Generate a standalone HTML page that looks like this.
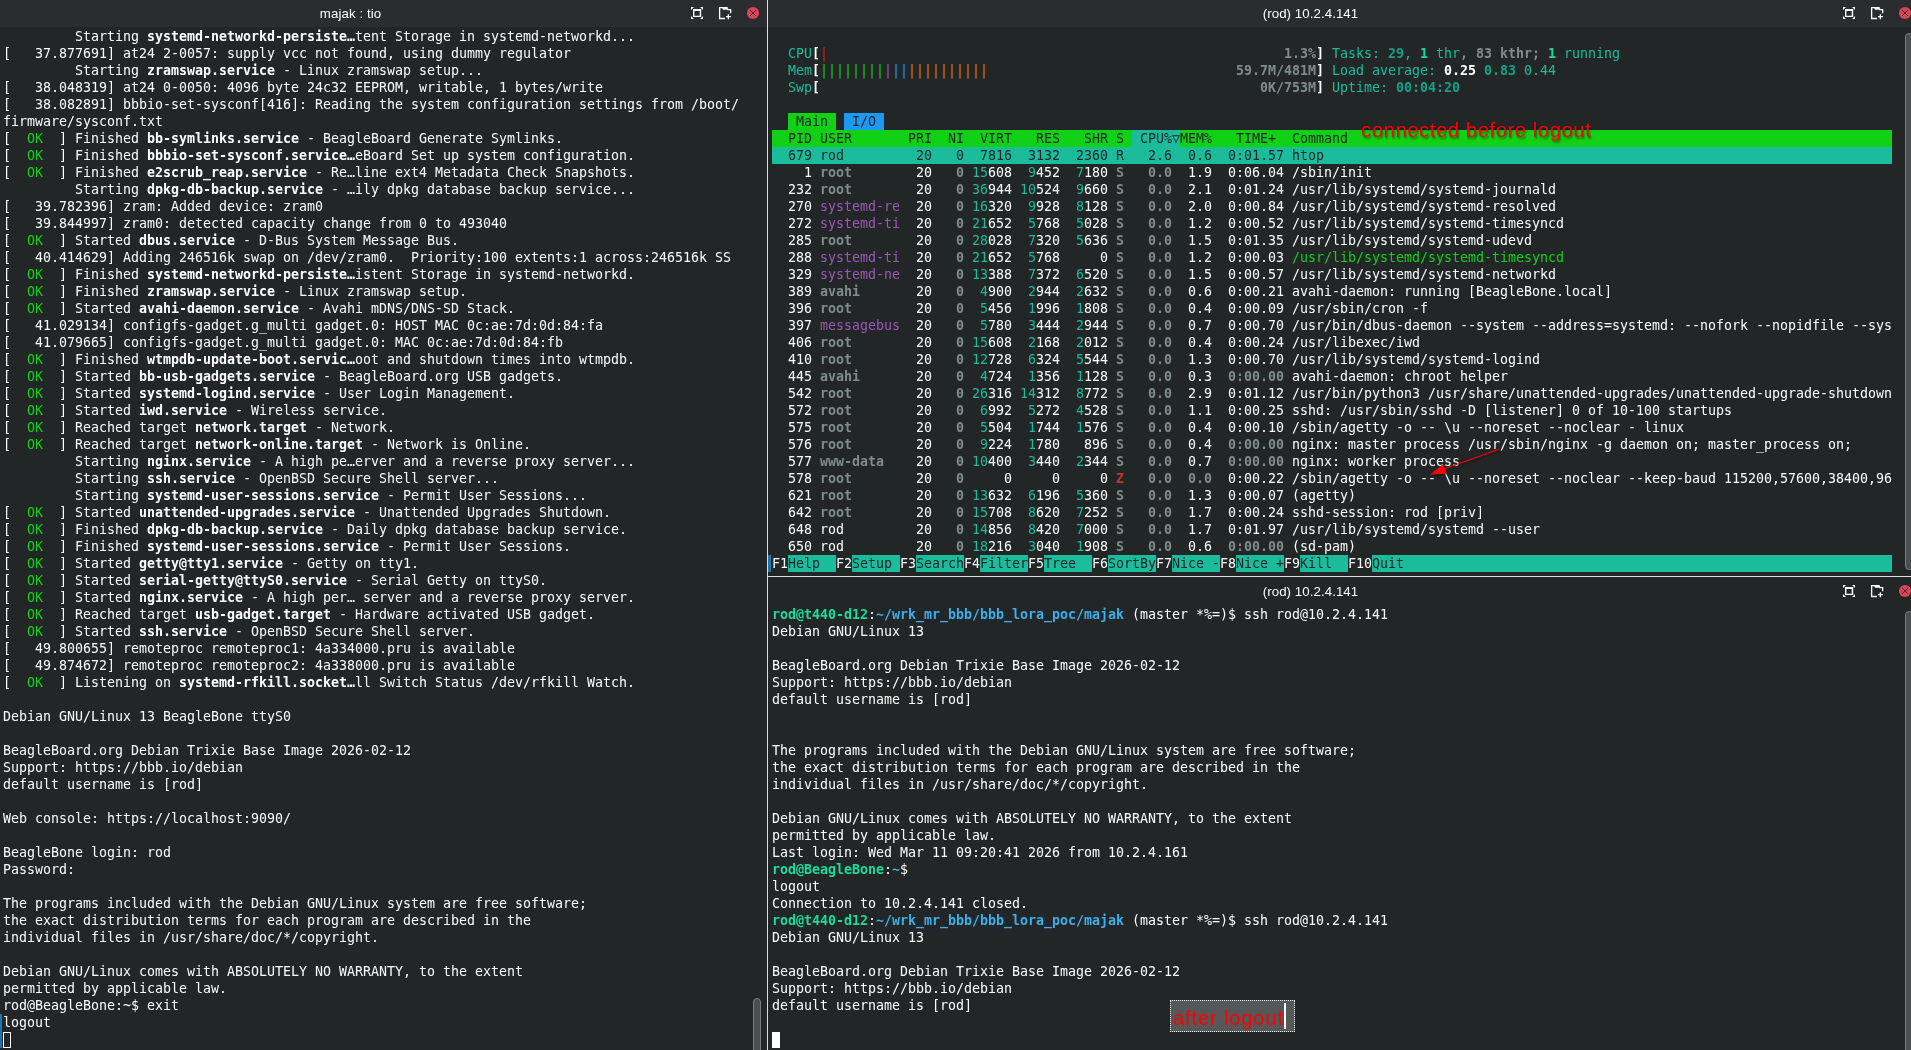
<!DOCTYPE html>
<html><head><meta charset="utf-8"><title>konsole</title>
<style>
html,body{margin:0;padding:0;background:#232627;}
body{width:1911px;height:1050px;overflow:hidden;position:relative;}
pre{will-change:transform;position:absolute;margin:0;font-family:"DejaVu Sans Mono","Liberation Mono",monospace;font-size:13.3px;letter-spacing:-0.0055px;line-height:17px;color:#fcfcfc;white-space:pre;font-variant-ligatures:none;}
.b,.w{font-weight:bold;color:#fff}
.g{color:#11d116}
.G{color:#1cdc9a;font-weight:bold}
.B{color:#3daee9;font-weight:bold}
.c{color:#1abc9c}
.C{color:#16a085;font-weight:bold}
.k{color:#7f8c8d;font-weight:bold}
.m{color:#9b59b6}
.r{color:#ed1515}
.R{color:#c0392b;font-weight:bold}
.o{color:#f67400}
.bl{color:#1d99f3}
.d{color:#232627}
i{position:absolute;height:17px;display:block}
.tb{position:absolute;height:27px;background:#2a2c2f;}
.tt{will-change:transform;letter-spacing:0.06px;position:absolute;font-family:"Liberation Sans",sans-serif;font-size:13.3px;color:#fcfcfc;line-height:27px;height:27px;text-align:center;white-space:nowrap}
.ic{position:absolute}
.sb{position:absolute;width:6px;border:1px solid #7a7c7d;background:#4b4d4f;border-radius:4px}
.ann{will-change:transform;position:absolute;font-family:"Liberation Sans","DejaVu Sans",sans-serif;color:#ff0000;white-space:nowrap}
</style></head><body>
<div class="tb" style="left:0;top:0;width:767px"></div>
<div class="tb" style="left:768px;top:0;width:1143px"></div>
<div class="tt" style="left:0;top:0;width:701px">majak : tio</div>
<div class="tt" style="left:768px;top:0;width:1085px">(rod) 10.2.4.141</div>
<div class="tt" style="left:768px;top:578px;width:1085px">(rod) 10.2.4.141</div>
<svg class="ic" style="left:690px;top:6px" width="14" height="14" viewBox="0 0 14 14"><path fill-rule="evenodd" d="M3 3.1h8.2v8H3zM4.4 5.1v4.7h5.3V5.1z" fill="#fcfcfc"/><path d="M1 1h3L1 4zM13 1v3L10 1zM1 13v-3l3 3zM13 13h-3l3-3z" fill="#fcfcfc"/></svg><svg class="ic" style="left:718px;top:6px" width="14" height="14" viewBox="0 0 14 14"><path d="M.95 1H9.4l1 1.9h2.9v4.4H12v-3H9.5L9 3.7H5.2l-1-1.4H2.3v9.5H7v1.4H.95z" fill="#fcfcfc"/><path d="M10.35 8.35v4.85M8.05 10.65h4.85" stroke="#fcfcfc" stroke-width="1.3" fill="none"/></svg><svg class="ic" style="left:746px;top:6px" width="14" height="14" viewBox="0 0 14 14"><circle cx="7" cy="7" r="6.1" fill="#da4453"/><path d="M4.1 4.1l5.8 5.8M9.9 4.1l-5.8 5.8" stroke="#2a2e32" stroke-width="0.9" fill="none"/></svg>
<svg class="ic" style="left:1842px;top:6px" width="14" height="14" viewBox="0 0 14 14"><path fill-rule="evenodd" d="M3 3.1h8.2v8H3zM4.4 5.1v4.7h5.3V5.1z" fill="#fcfcfc"/><path d="M1 1h3L1 4zM13 1v3L10 1zM1 13v-3l3 3zM13 13h-3l3-3z" fill="#fcfcfc"/></svg><svg class="ic" style="left:1870px;top:6px" width="14" height="14" viewBox="0 0 14 14"><path d="M.95 1H9.4l1 1.9h2.9v4.4H12v-3H9.5L9 3.7H5.2l-1-1.4H2.3v9.5H7v1.4H.95z" fill="#fcfcfc"/><path d="M10.35 8.35v4.85M8.05 10.65h4.85" stroke="#fcfcfc" stroke-width="1.3" fill="none"/></svg><svg class="ic" style="left:1898px;top:6px" width="14" height="14" viewBox="0 0 14 14"><circle cx="7" cy="7" r="6.1" fill="#da4453"/><path d="M4.1 4.1l5.8 5.8M9.9 4.1l-5.8 5.8" stroke="#2a2e32" stroke-width="0.9" fill="none"/></svg>
<svg class="ic" style="left:1842px;top:584px" width="14" height="14" viewBox="0 0 14 14"><path fill-rule="evenodd" d="M3 3.1h8.2v8H3zM4.4 5.1v4.7h5.3V5.1z" fill="#fcfcfc"/><path d="M1 1h3L1 4zM13 1v3L10 1zM1 13v-3l3 3zM13 13h-3l3-3z" fill="#fcfcfc"/></svg><svg class="ic" style="left:1870px;top:584px" width="14" height="14" viewBox="0 0 14 14"><path d="M.95 1H9.4l1 1.9h2.9v4.4H12v-3H9.5L9 3.7H5.2l-1-1.4H2.3v9.5H7v1.4H.95z" fill="#fcfcfc"/><path d="M10.35 8.35v4.85M8.05 10.65h4.85" stroke="#fcfcfc" stroke-width="1.3" fill="none"/></svg><svg class="ic" style="left:1898px;top:584px" width="14" height="14" viewBox="0 0 14 14"><circle cx="7" cy="7" r="6.1" fill="#da4453"/><path d="M4.1 4.1l5.8 5.8M9.9 4.1l-5.8 5.8" stroke="#2a2e32" stroke-width="0.9" fill="none"/></svg>
<div style="position:absolute;left:767px;top:0;width:1px;height:1050px;background:#dcdcdc"></div>
<div style="position:absolute;left:768px;top:576px;width:1143px;height:1px;background:#dcdcdc"></div>
<i style="left:788px;top:113px;width:48px;background:#11d116"></i><i style="left:844px;top:113px;width:40px;background:#1d99f3"></i><i style="left:772px;top:130px;width:1120px;background:#11d116"></i><i style="left:1132px;top:130px;width:48px;background:#1abc9c"></i><i style="left:772px;top:147px;width:1120px;background:#1abc9c"></i><i style="left:788px;top:555px;width:48px;background:#1abc9c"></i><i style="left:852px;top:555px;width:48px;background:#1abc9c"></i><i style="left:916px;top:555px;width:48px;background:#1abc9c"></i><i style="left:980px;top:555px;width:48px;background:#1abc9c"></i><i style="left:1044px;top:555px;width:48px;background:#1abc9c"></i><i style="left:1108px;top:555px;width:48px;background:#1abc9c"></i><i style="left:1172px;top:555px;width:48px;background:#1abc9c"></i><i style="left:1236px;top:555px;width:48px;background:#1abc9c"></i><i style="left:1300px;top:555px;width:48px;background:#1abc9c"></i><i style="left:1372px;top:555px;width:32px;background:#1abc9c"></i><i style="left:1404px;top:555px;width:488px;background:#1abc9c"></i>
<pre style="left:3px;top:28px">
         Starting <span class="b">systemd-networkd-persiste…</span>tent Storage in systemd-networkd...
[   37.877691] at24 2-0057: supply vcc not found, using dummy regulator
         Starting <span class="b">zramswap.service</span> - Linux zramswap setup...
[   38.048319] at24 0-0050: 4096 byte 24c32 EEPROM, writable, 1 bytes/write
[   38.082891] bbbio-set-sysconf[416]: Reading the system configuration settings from /boot/
firmware/sysconf.txt
[  <span class="g">OK</span>  ] Finished <span class="b">bb-symlinks.service</span> - BeagleBoard Generate Symlinks.
[  <span class="g">OK</span>  ] Finished <span class="b">bbbio-set-sysconf.service…</span>eBoard Set up system configuration.
[  <span class="g">OK</span>  ] Finished <span class="b">e2scrub_reap.service</span> - Re…line ext4 Metadata Check Snapshots.
         Starting <span class="b">dpkg-db-backup.service</span> - …ily dpkg database backup service...
[   39.782396] zram: Added device: zram0
[   39.844997] zram0: detected capacity change from 0 to 493040
[  <span class="g">OK</span>  ] Started <span class="b">dbus.service</span> - D-Bus System Message Bus.
[   40.414629] Adding 246516k swap on /dev/zram0.  Priority:100 extents:1 across:246516k SS
[  <span class="g">OK</span>  ] Finished <span class="b">systemd-networkd-persiste…</span>istent Storage in systemd-networkd.
[  <span class="g">OK</span>  ] Finished <span class="b">zramswap.service</span> - Linux zramswap setup.
[  <span class="g">OK</span>  ] Started <span class="b">avahi-daemon.service</span> - Avahi mDNS/DNS-SD Stack.
[   41.029134] configfs-gadget.g_multi gadget.0: HOST MAC 0c:ae:7d:0d:84:fa
[   41.079665] configfs-gadget.g_multi gadget.0: MAC 0c:ae:7d:0d:84:fb
[  <span class="g">OK</span>  ] Finished <span class="b">wtmpdb-update-boot.servic…</span>oot and shutdown times into wtmpdb.
[  <span class="g">OK</span>  ] Started <span class="b">bb-usb-gadgets.service</span> - BeagleBoard.org USB gadgets.
[  <span class="g">OK</span>  ] Started <span class="b">systemd-logind.service</span> - User Login Management.
[  <span class="g">OK</span>  ] Started <span class="b">iwd.service</span> - Wireless service.
[  <span class="g">OK</span>  ] Reached target <span class="b">network.target</span> - Network.
[  <span class="g">OK</span>  ] Reached target <span class="b">network-online.target</span> - Network is Online.
         Starting <span class="b">nginx.service</span> - A high pe…erver and a reverse proxy server...
         Starting <span class="b">ssh.service</span> - OpenBSD Secure Shell server...
         Starting <span class="b">systemd-user-sessions.service</span> - Permit User Sessions...
[  <span class="g">OK</span>  ] Started <span class="b">unattended-upgrades.service</span> - Unattended Upgrades Shutdown.
[  <span class="g">OK</span>  ] Finished <span class="b">dpkg-db-backup.service</span> - Daily dpkg database backup service.
[  <span class="g">OK</span>  ] Finished <span class="b">systemd-user-sessions.service</span> - Permit User Sessions.
[  <span class="g">OK</span>  ] Started <span class="b">getty@tty1.service</span> - Getty on tty1.
[  <span class="g">OK</span>  ] Started <span class="b">serial-getty@ttyS0.service</span> - Serial Getty on ttyS0.
[  <span class="g">OK</span>  ] Started <span class="b">nginx.service</span> - A high per… server and a reverse proxy server.
[  <span class="g">OK</span>  ] Reached target <span class="b">usb-gadget.target</span> - Hardware activated USB gadget.
[  <span class="g">OK</span>  ] Started <span class="b">ssh.service</span> - OpenBSD Secure Shell server.
[   49.800655] remoteproc remoteproc1: 4a334000.pru is available
[   49.874672] remoteproc remoteproc2: 4a338000.pru is available
[  <span class="g">OK</span>  ] Listening on <span class="b">systemd-rfkill.socket…</span>ll Switch Status /dev/rfkill Watch.

Debian GNU/Linux 13 BeagleBone ttyS0

BeagleBoard.org Debian Trixie Base Image 2026-02-12
Support: https://bbb.io/debian
default username is [rod]

Web console: https://localhost:9090/

BeagleBone login: rod
Password: 

The programs included with the Debian GNU/Linux system are free software;
the exact distribution terms for each program are described in the
individual files in /usr/share/doc/*/copyright.

Debian GNU/Linux comes with ABSOLUTELY NO WARRANTY, to the extent
permitted by applicable law.
rod@BeagleBone:~$ exit
logout
</pre>
<pre style="left:772px;top:28px">

  <span class="c">CPU</span><span class="w">[</span><span class="r">|                                                         </span><span class="k">1.3%</span><span class="w">] </span><span class="c">Tasks: </span><span class="C">29</span><span class="c">, </span><span class="G">1 </span><span class="c">thr</span><span class="k">, 83 kthr; </span><span class="G">1 </span><span class="c">running</span>
  <span class="c">Mem</span><span class="w">[</span><span class="g">||||||||</span><span class="m">|</span><span class="bl">||</span><span class="o">||||||||||                               </span><span class="k">59.7M/481M</span><span class="w">] </span><span class="c">Load average: </span><span class="w">0.25 </span><span class="C">0.83 </span><span class="c">0.44</span>
  <span class="c">Swp</span><span class="w">[                                                       </span><span class="k">0K/753M</span><span class="w">] </span><span class="c">Uptime: </span><span class="C">00:04:20</span>

   <span class="d">Main   I/O</span>
  <span class="d">PID USER       PRI  NI  VIRT   RES   SHR S  CPU%▽MEM%   TIME+  Command</span>
  <span class="d">679 rod         20   0  7816  3132  2360 R   2.6  0.6  0:01.57 htop</span>
    1 <span class="k">root        </span>20   <span class="k">0 </span><span class="c">15</span>608  <span class="c">9</span>452  <span class="c">7</span>180 <span class="k">S   0.0  </span>1.9  0:06.04 /sbin/init
  232 <span class="k">root        </span>20   <span class="k">0 </span><span class="c">36</span>944 <span class="c">10</span>524  <span class="c">9</span>660 <span class="k">S   0.0  </span>2.1  0:01.24 /usr/lib/systemd/systemd-journald
  270 <span class="m">systemd-re  </span>20   <span class="k">0 </span><span class="c">16</span>320  <span class="c">9</span>928  <span class="c">8</span>128 <span class="k">S   0.0  </span>2.0  0:00.84 /usr/lib/systemd/systemd-resolved
  272 <span class="m">systemd-ti  </span>20   <span class="k">0 </span><span class="c">21</span>652  <span class="c">5</span>768  <span class="c">5</span>028 <span class="k">S   0.0  </span>1.2  0:00.52 /usr/lib/systemd/systemd-timesyncd
  285 <span class="k">root        </span>20   <span class="k">0 </span><span class="c">28</span>028  <span class="c">7</span>320  <span class="c">5</span>636 <span class="k">S   0.0  </span>1.5  0:01.35 /usr/lib/systemd/systemd-udevd
  288 <span class="m">systemd-ti  </span>20   <span class="k">0 </span><span class="c">21</span>652  <span class="c">5</span>768     0 <span class="k">S   0.0  </span>1.2  0:00.03 <span class="g">/usr/lib/systemd/systemd-timesyncd</span>
  329 <span class="m">systemd-ne  </span>20   <span class="k">0 </span><span class="c">13</span>388  <span class="c">7</span>372  <span class="c">6</span>520 <span class="k">S   0.0  </span>1.5  0:00.57 /usr/lib/systemd/systemd-networkd
  389 <span class="k">avahi       </span>20   <span class="k">0  </span><span class="c">4</span>900  <span class="c">2</span>944  <span class="c">2</span>632 <span class="k">S   0.0  </span>0.6  0:00.21 avahi-daemon: running [BeagleBone.local]
  396 <span class="k">root        </span>20   <span class="k">0  </span><span class="c">5</span>456  <span class="c">1</span>996  <span class="c">1</span>808 <span class="k">S   0.0  </span>0.4  0:00.09 /usr/sbin/cron -f
  397 <span class="m">messagebus  </span>20   <span class="k">0  </span><span class="c">5</span>780  <span class="c">3</span>444  <span class="c">2</span>944 <span class="k">S   0.0  </span>0.7  0:00.70 /usr/bin/dbus-daemon --system --address=systemd: --nofork --nopidfile --sys
  406 <span class="k">root        </span>20   <span class="k">0 </span><span class="c">15</span>608  <span class="c">2</span>168  <span class="c">2</span>012 <span class="k">S   0.0  </span>0.4  0:00.24 /usr/libexec/iwd
  410 <span class="k">root        </span>20   <span class="k">0 </span><span class="c">12</span>728  <span class="c">6</span>324  <span class="c">5</span>544 <span class="k">S   0.0  </span>1.3  0:00.70 /usr/lib/systemd/systemd-logind
  445 <span class="k">avahi       </span>20   <span class="k">0  </span><span class="c">4</span>724  <span class="c">1</span>356  <span class="c">1</span>128 <span class="k">S   0.0  </span>0.3  <span class="k">0:00.00 </span>avahi-daemon: chroot helper
  542 <span class="k">root        </span>20   <span class="k">0 </span><span class="c">26</span>316 <span class="c">14</span>312  <span class="c">8</span>772 <span class="k">S   0.0  </span>2.9  0:01.12 /usr/bin/python3 /usr/share/unattended-upgrades/unattended-upgrade-shutdown
  572 <span class="k">root        </span>20   <span class="k">0  </span><span class="c">6</span>992  <span class="c">5</span>272  <span class="c">4</span>528 <span class="k">S   0.0  </span>1.1  0:00.25 sshd: /usr/sbin/sshd -D [listener] 0 of 10-100 startups
  575 <span class="k">root        </span>20   <span class="k">0  </span><span class="c">5</span>504  <span class="c">1</span>744  <span class="c">1</span>576 <span class="k">S   0.0  </span>0.4  0:00.10 /sbin/agetty -o -- \u --noreset --noclear - linux
  576 <span class="k">root        </span>20   <span class="k">0  </span><span class="c">9</span>224  <span class="c">1</span>780   896 <span class="k">S   0.0  </span>0.4  <span class="k">0:00.00 </span>nginx: master process /usr/sbin/nginx -g daemon on; master_process on;
  577 <span class="k">www-data    </span>20   <span class="k">0 </span><span class="c">10</span>400  <span class="c">3</span>440  <span class="c">2</span>344 <span class="k">S   0.0  </span>0.7  <span class="k">0:00.00 </span>nginx: worker process
  578 <span class="k">root        </span>20   <span class="k">0     </span>0     0     0 <span class="R">Z   </span><span class="k">0.0  0.0  </span>0:00.22 /sbin/agetty -o -- \u --noreset --noclear --keep-baud 115200,57600,38400,96
  621 <span class="k">root        </span>20   <span class="k">0 </span><span class="c">13</span>632  <span class="c">6</span>196  <span class="c">5</span>360 <span class="k">S   0.0  </span>1.3  0:00.07 (agetty)
  642 <span class="k">root        </span>20   <span class="k">0 </span><span class="c">15</span>708  <span class="c">8</span>620  <span class="c">7</span>252 <span class="k">S   0.0  </span>1.7  0:00.24 sshd-session: rod [priv]
  648 rod         20   <span class="k">0 </span><span class="c">14</span>856  <span class="c">8</span>420  <span class="c">7</span>000 <span class="k">S   0.0  </span>1.7  0:01.97 /usr/lib/systemd/systemd --user
  650 rod         20   <span class="k">0 </span><span class="c">18</span>216  <span class="c">3</span>040  <span class="c">1</span>908 <span class="k">S   0.0  </span>0.6  <span class="k">0:00.00 </span>(sd-pam)
F1<span class="d">Help  </span>F2<span class="d">Setup </span>F3<span class="d">Search</span>F4<span class="d">Filter</span>F5<span class="d">Tree  </span>F6<span class="d">SortBy</span>F7<span class="d">Nice -</span>F8<span class="d">Nice +</span>F9<span class="d">Kill  </span>F10<span class="d">Quit</span></pre>
<pre style="left:772px;top:606px">
<span class="G">rod@t440-d12</span>:<span class="B">~/wrk_mr_bbb/bbb_lora_poc/majak</span> (master *%=)$ ssh rod@10.2.4.141
Debian GNU/Linux 13

BeagleBoard.org Debian Trixie Base Image 2026-02-12
Support: https://bbb.io/debian
default username is [rod]


The programs included with the Debian GNU/Linux system are free software;
the exact distribution terms for each program are described in the
individual files in /usr/share/doc/*/copyright.

Debian GNU/Linux comes with ABSOLUTELY NO WARRANTY, to the extent
permitted by applicable law.
Last login: Wed Mar 11 09:20:41 2026 from 10.2.4.161
<span class="G">rod@BeagleBone</span>:<span class="B">~</span>$ 
logout
Connection to 10.2.4.141 closed.
<span class="G">rod@t440-d12</span>:<span class="B">~/wrk_mr_bbb/bbb_lora_poc/majak</span> (master *%=)$ ssh rod@10.2.4.141
Debian GNU/Linux 13

BeagleBoard.org Debian Trixie Base Image 2026-02-12
Support: https://bbb.io/debian
default username is [rod]

</pre>
<div style="position:absolute;left:0;top:1014px;width:2px;height:34px;background:#2173ad"></div>
<div style="position:absolute;left:768px;top:555px;width:3px;height:17px;background:#2173ad"></div>
<div style="position:absolute;left:3px;top:1032px;width:6px;height:14px;border:1px solid #fcfcfc"></div>
<div style="position:absolute;left:772px;top:1032px;width:8px;height:16px;background:#fcfcfc"></div>
<div class="sb" style="left:753px;top:998px;height:70px"></div>
<div class="sb" style="left:1905px;top:33px;height:535px"></div>
<div class="sb" style="left:1905px;top:611px;height:470px"></div>
<div class="ann" style="left:1361px;top:118px;font-size:20.5px;letter-spacing:0.45px;line-height:24px;text-shadow:1px 2px 2px rgba(0,0,0,0.45)">connected before logout</div>
<svg style="position:absolute;left:1420px;top:440px;overflow:visible" width="90" height="45" viewBox="1420 440 90 45"><g filter="drop-shadow(1px 1px 1px rgba(0,0,0,0.5))"><path d="M1499 449.3L1444 469" stroke="#ff0000" stroke-width="1.1" fill="none"/><path d="M1430 474.7L1443 464.2L1446.8 473.4z" fill="#ff0000"/></g></svg>
<div style="position:absolute;left:1170px;top:1000px;width:123px;height:30px;border:1px dotted #f0f0f0;background:#555759"></div>
<div class="ann" style="left:1173px;top:1006px;font-size:20.5px;letter-spacing:0.7px;line-height:24px">after logout</div>
<div style="position:absolute;left:1284px;top:1003px;width:2px;height:26px;background:#fff"></div>
</body></html>
